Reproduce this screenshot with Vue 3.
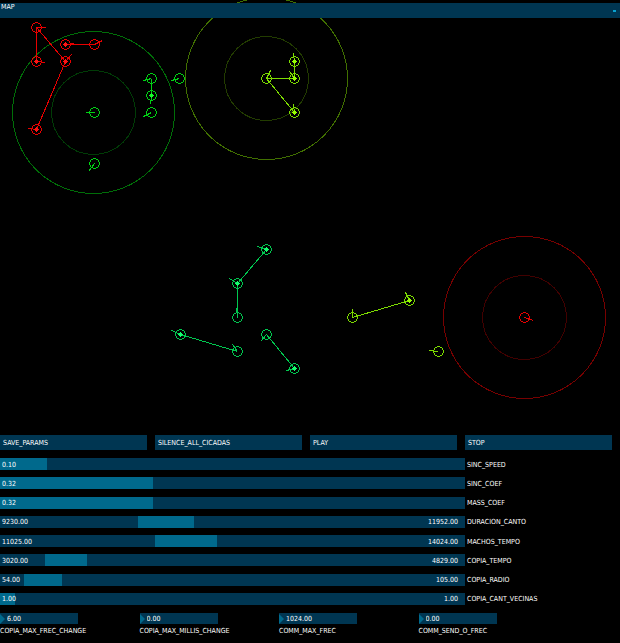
<script setup>
import { ref } from 'vue'

const red = '#e80000'
const green = '#00d214'
const lime = '#7ddc00'
const mint = '#00c850'

const rings = [
  { x: 93, y: 112, outer: '#006e08', inner: '#003c06' },
  { x: 266, y: 78, outer: '#417000', inner: '#223c00' },
  { x: 524, y: 317, outer: '#780000', inner: '#420000' },
]

// Each cicada: position, tip of its pointer, colour, and whether it is singing.
const cicadas = [
  { x: 36, y: 27, tx: 45, ty: 27, c: red },
  { x: 65, y: 44, tx: 74, ty: 43, c: red, on: true },
  { x: 94, y: 44, tx: 102, ty: 40, c: red },
  { x: 36, y: 61, tx: 45, ty: 62, c: red, on: true },
  { x: 65, y: 61, tx: 71, ty: 54, c: red, on: true },
  { x: 36, y: 129, tx: 28, ty: 128, c: red, on: true },
  { x: 524, y: 317, tx: 533, ty: 320, c: red },
  { x: 94, y: 112, tx: 85, ty: 112, c: green },
  { x: 151, y: 78, tx: 143, ty: 80, c: green },
  { x: 179, y: 78, tx: 171, ty: 80, c: green },
  { x: 151, y: 95, tx: 150, ty: 104, c: green, on: true },
  { x: 151, y: 112, tx: 143, ty: 116, c: green },
  { x: 94, y: 163, tx: 88, ty: 171, c: green },
  { x: 266, y: 78, tx: 270, ty: 70, c: lime },
  { x: 294, y: 61, tx: 293, ty: 53, c: lime, on: true },
  { x: 294, y: 78, tx: 289, ty: 71, c: lime, on: true },
  { x: 294, y: 112, tx: 293, ty: 104, c: lime, on: true },
  { x: 352, y: 317, tx: 352, ty: 308, c: lime },
  { x: 409, y: 300, tx: 405, ty: 292, c: lime, on: true },
  { x: 438, y: 351, tx: 429, ty: 350, c: lime },
  { x: 266, y: 249, tx: 257, ty: 246, c: mint, on: true },
  { x: 237, y: 283, tx: 229, ty: 278, c: mint, on: true },
  { x: 237, y: 317, tx: 236, ty: 308, c: mint },
  { x: 180, y: 334, tx: 171, ty: 330, c: mint, on: true },
  { x: 237, y: 351, tx: 232, ty: 344, c: mint },
  { x: 266, y: 334, tx: 260, ty: 341, c: mint },
  { x: 294, y: 368, tx: 286, ty: 370, c: mint, on: true },
]
const bright = { [red]: '#ff1414', [green]: '#14ff28', [lime]: '#96ff00', [mint]: '#14ff6e' }

const links = [
  [36, 27, 36, 61, red],
  [36, 27, 65, 61, red],
  [65, 61, 36, 129, red],
  [65, 44, 94, 44, red],
  [151, 78, 151, 95, green],
  [266, 78, 294, 78, lime],
  [294, 61, 294, 78, lime],
  [266, 78, 294, 112, lime],
  [352, 317, 409, 300, lime],
  [266, 249, 237, 283, mint],
  [237, 283, 237, 317, mint],
  [180, 334, 237, 351, mint],
  [266, 334, 294, 368, mint],
]

const actions = ['SAVE_PARAMS', 'SILENCE_ALL_CICADAS', 'PLAY', 'STOP']

// from/to are percentages of the track.
const sliders = ref([
  { name: 'SINC_SPEED', low: '0.10', from: 0, to: 10 },
  { name: 'SINC_COEF', low: '0.32', from: 0, to: 32.8 },
  { name: 'MASS_COEF', low: '0.32', from: 0, to: 32.8 },
  { name: 'DURACION_CANTO', low: '9230.00', high: '11952.00', from: 29.7, to: 41.8 },
  { name: 'MACHOS_TEMPO', low: '11025.00', high: '14024.00', from: 33.3, to: 46.6 },
  { name: 'COPIA_TEMPO', low: '3020.00', high: '4829.00', from: 9.7, to: 18.8 },
  { name: 'COPIA_RADIO', low: '54.00', high: '105.00', from: 5.2, to: 13.3 },
  { name: 'COPIA_CANT_VECINAS', low: '1.00', high: '1.00', from: 0, to: 3.3 },
])

const numbers = ref([
  { name: 'COPIA_MAX_FREC_CHANGE', value: '6.00' },
  { name: 'COPIA_MAX_MILLIS_CHANGE', value: '0.00' },
  { name: 'COMM_MAX_FREC', value: '1024.00' },
  { name: 'COMM_SEND_O_FREC', value: '0.00' },
])
</script>

<template>
  <main class="app">
    <section class="map">
      <svg class="canvas" viewBox="0 0 620 435">
        <g fill="none" transform="translate(0.5 0.5)" shape-rendering="crispEdges">
          <g v-for="(r, i) in rings" :key="'r' + i">
            <circle :cx="r.x" :cy="r.y" r="81" :stroke="r.outer" />
            <circle :cx="r.x" :cy="r.y" r="42" :stroke="r.inner" />
          </g>
          <line
            v-for="(l, i) in links"
            :key="'l' + i"
            :x1="l[0]" :y1="l[1]" :x2="l[2]" :y2="l[3]"
            :stroke="l[4]"
          />
          <g v-for="(n, i) in cicadas" :key="'n' + i" :stroke="n.c">
            <circle :cx="n.x" :cy="n.y" r="4.8" />
            <line :x1="n.x" :y1="n.y" :x2="n.tx" :y2="n.ty" />
            <circle v-if="n.on" :cx="n.x" :cy="n.y" r="2.1" :fill="bright[n.c]" stroke="none" />
          </g>
        </g>
      </svg>
      <header class="bar">
        <h1 class="title">MAP</h1>
        <span class="mark"></span>
      </header>
    </section>

    <section class="panel">
      <div class="actions">
        <button v-for="a in actions" :key="a" type="button" class="action">{{ a }}</button>
      </div>

      <div class="sliders">
        <div v-for="s in sliders" :key="s.name" class="row">
          <div class="track">
            <div class="fill" :style="{ left: s.from + '%', width: s.to - s.from + '%' }"></div>
            <span class="low">{{ s.low }}</span>
            <span v-if="s.high" class="high">{{ s.high }}</span>
            <input v-if="s.high" v-model.number="s.from" class="range" type="range" min="0" max="100" step="0.1" :aria-label="s.name" />
            <input :id="s.name" v-model.number="s.to" class="range" type="range" min="0" max="100" step="0.1" />
          </div>
          <label :for="s.name" class="name">{{ s.name }}</label>
        </div>
      </div>

      <div class="numbers">
        <div v-for="n in numbers" :key="n.name" class="number">
          <div class="box">
            <svg class="arrow" viewBox="0 0 5 10"><path d="M0 0L5 5L0 10Z" fill="#00698c" /></svg>
            <input :id="n.name" v-model="n.value" class="value" type="text" />
          </div>
          <label :for="n.name" class="caption">{{ n.name }}</label>
        </div>
      </div>
    </section>
  </main>
</template>

<style>
body {
  background: #000;
}
</style>

<style scoped>
.app {
  color: #fff;
  background: #000;
  font-family: "DejaVu Sans Condensed", "Liberation Sans", sans-serif;
  font-size: 7px;
  line-height: 8px;
  white-space: nowrap;
}
.map {
  position: relative;
}
.canvas {
  display: block;
  width: 100%;
}
.bar {
  position: absolute;
  top: 3px;
  left: 0;
  right: 0;
  height: 15px;
  display: flex;
  justify-content: space-between;
  align-items: flex-start;
  background: #003652;
  box-sizing: border-box;
  padding: 0 4px 0 1px;
}
.title {
  margin: 0;
  font-size: 7px;
  font-weight: 400;
}
.mark {
  width: 3px;
  height: 2px;
  margin-top: 7px;
  background: #08a2cf;
}
.actions {
  display: grid;
  grid-template-columns: repeat(4, 1fr);
  gap: 8px;
  padding-right: 8px;
}
.action {
  height: 15px;
  padding: 1px 3px 0;
  border: 0;
  background: #003652;
  color: inherit;
  font: inherit;
  text-align: left;
}
.sliders {
  display: grid;
  align-content: space-between;
  min-height: 147px;
  margin-top: 8px;
}
.row {
  display: grid;
  grid-template-columns: 3fr 1fr;
  align-items: center;
}
.track {
  position: relative;
  display: flex;
  justify-content: space-between;
  align-items: center;
  box-sizing: border-box;
  height: 12px;
  padding: 1px 7px 0 2px;
  background: #003652;
}
.fill {
  position: absolute;
  top: 0;
  bottom: 0;
  background: #00698c;
}
.low,
.high {
  position: relative;
}
.range {
  position: absolute;
  inset: 0;
  width: 100%;
  height: 100%;
  margin: 0;
  opacity: 0;
  pointer-events: none;
}
.range::-webkit-slider-thumb {
  pointer-events: auto;
}
.name {
  padding: 1px 0 0 2px;
}
.numbers {
  display: grid;
  grid-template-columns: repeat(4, 1fr);
  width: 90%;
  margin-top: 8px;
}
.box {
  display: flex;
  align-items: center;
  width: 56%;
  height: 11px;
  background: #003652;
}
.arrow {
  flex: none;
  width: 5px;
  height: 10px;
}
.value {
  min-width: 0;
  flex: 1;
  padding: 0 2px;
  border: 0;
  background: transparent;
  color: inherit;
  font: inherit;
}
.caption {
  display: block;
  margin-top: 3px;
}
</style>
